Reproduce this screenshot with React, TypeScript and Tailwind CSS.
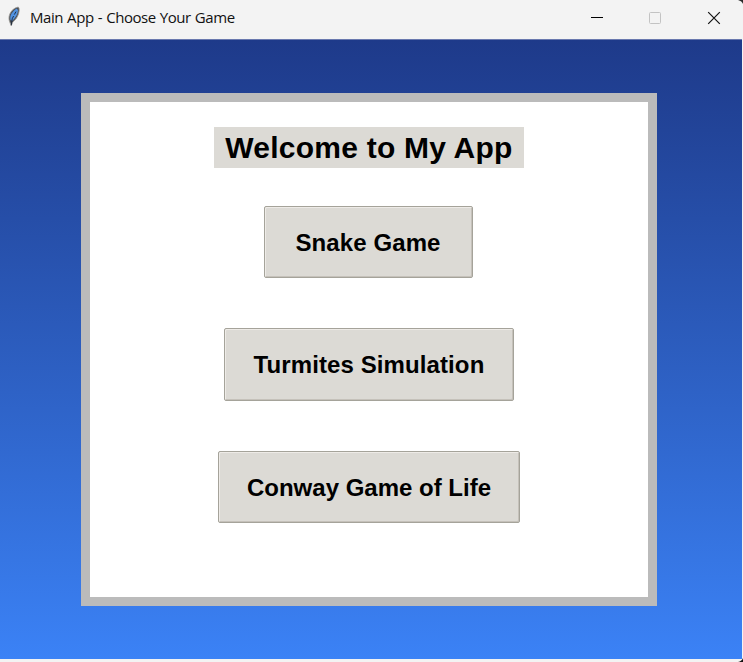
function Feather() {
  return (
    <svg width="14" height="22" viewBox="0 0 14 22" className="shrink-0">
      <path d="M11.2 1.1C8 1.3 4.2 4.6 2.6 8.4C1.7 10.8 1.8 13.4 2.4 15.2L4.2 19.8L5.8 16C9.4 13.4 12 8.8 12.2 4.4C12.3 2.8 12 1.6 11.2 1.1Z" fill="#4a4f56" stroke="#a3a19c" strokeWidth="0.8" />
      <path d="M9.8 2.4C6.8 4.2 3.8 7.4 3.3 11L3.4 14L5.4 14.8C8.6 11.6 10.9 7.8 11 4.2Z" fill="#5193e2" />
      <path d="M9 5.6L7.3 8.6M6.6 10L5.2 12.8L4.3 19.2" fill="none" stroke="#1b273a" strokeWidth="0.9" />
    </svg>
  );
}

function GameButton({ label, className }: { label: string; className: string }) {
  return (
    <button
      className={`${className} shrink-0 rounded-[2px] border border-[#a5a39a] bg-[#dcdad5] text-center text-[24px] leading-none font-bold whitespace-nowrap text-black shadow-[inset_1px_1px_0_#eeebe7,inset_-1px_-1px_0_#c5c1ba]`}
    >
      {label}
    </button>
  );
}

export default function App() {
  return (
    <div className="flex h-[662px] w-[743px] flex-col overflow-hidden bg-[#f3f3f3] font-['Liberation_Sans',Arial,sans-serif]">
      <header className="relative flex h-[39px] shrink-0 items-start">
        <div className="flex pt-[6px] pl-[7px]">
          <Feather />
        </div>
        <h1 className="mt-[5px] ml-[9px] font-['Open_Sans',sans-serif] text-[15px] leading-6 font-normal tracking-[-0.44px] whitespace-nowrap text-[#111] [word-spacing:0.6px]">
          Main App - Choose Your Game
        </h1>
        <svg width="160" height="39" viewBox="0 0 160 39" className="ml-auto shrink-0" fill="none">
          <path d="M8 17.5H20" stroke="#000" />
          <rect x="66.5" y="12.5" width="11" height="11" rx="1" stroke="#c3c3c3" />
          <path d="M125.2 12.2L136.8 23.8M136.8 12.2L125.2 23.8" stroke="#111" strokeWidth="1.2" />
        </svg>
        <svg width="5" height="4" viewBox="0 0 5 4" className="absolute top-0 right-0">
          <path d="M0 0H5V4Q4 1 0 0Z" fill="#292929" />
        </svg>
      </header>
      <main className="relative flex min-h-0 flex-1 flex-col pr-px">
        <div className="flex h-[620px] shrink-0 justify-center border-t border-[#6978ae] bg-linear-to-b from-[#1e3a8a] to-[#3b82f6] pt-[53px] pr-[4px]">
          <section className="flex h-[513px] w-[576px] flex-col items-center border-[9px] border-[#bbbbbb] bg-white pt-[25px]">
            <h2 className="mb-[38px] h-[41px] w-[310px] shrink-0 bg-[#dcdad5] text-center text-[30px] leading-[41px] font-bold tracking-[0.23px] whitespace-nowrap text-black">
              Welcome to My App
            </h2>
            <div className="flex flex-col items-center gap-[50px]">
              <GameButton label="Snake Game" className="mr-px h-[72px] w-[209px] pt-px pr-px tracking-[0.1px]" />
              <GameButton label="Turmites Simulation" className="h-[73px] w-[290px] pt-px tracking-[0.1px]" />
              <GameButton label="Conway Game of Life" className="h-[72px] w-[302px] pt-px" />
            </div>
          </section>
        </div>
        <svg width="5" height="4" viewBox="0 0 5 4" className="absolute right-0 bottom-0">
          <path d="M5 0V4H0Q4 3 5 0Z" fill="#111" />
        </svg>
      </main>
    </div>
  );
}
